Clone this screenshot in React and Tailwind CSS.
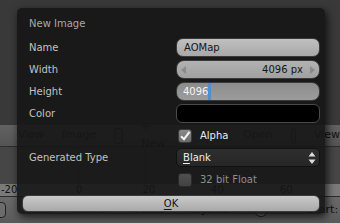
import React from "react";

const font = { fontFamily: '"DejaVu Sans", "Liberation Sans", sans-serif' };

const Label = ({ children }) => (
  <div className="h-[19px] flex items-center text-[10px] text-[#c2c2c2]">{children}</div>
);

const Row = ({ label, children }) => (
  <div className="grid grid-cols-[147px_144px] mb-[3px]">
    <Label>{label}</Label>
    <div className="h-[19px]">{children}</div>
  </div>
);

const Check = ({ checked, text, dim }) => (
  <div className="h-[19px] flex items-center gap-[8px] pl-[2px]">
    <div
      className={`w-[14px] h-[14px] rounded-[3px] border flex items-center justify-center ${
        checked
          ? "bg-gradient-to-b from-[#8a8a8a] to-[#6a6a6a] border-[#3a3a3a]"
          : "bg-gradient-to-b from-[#505050] to-[#424242] border-[#2a2a2a]"
      }`}
    >
      {checked && (
        <svg width="12" height="12" viewBox="0 0 12 12">
          <path d="M2 6.2 L5 9.2 L10.5 1.8" fill="none" stroke="#f2f2f2" strokeWidth="2" />
        </svg>
      )}
    </div>
    <span className={`text-[10px] ${dim ? "text-[#8e8e8e]" : "text-[#ececec]"}`}>{text}</span>
  </div>
);

export default function App() {
  return (
    <div className="relative w-[340px] h-[223px] overflow-hidden bg-[#3a3a3a]" style={font}>
      {/* blender ui behind the popup */}
      <div className="flex flex-col">
        <div className="h-[125px] bg-[#393939]" />
        <div className="h-[22px] bg-gradient-to-b from-[#626262] to-[#545454] border-b border-[#2c2c2c] flex items-center text-[11px] text-[#111] gap-[18px]">
          <div className="w-[10px] h-[16px] -ml-[4px] rounded-[4px] border border-[#222] bg-[#6c6c6c]" />
          <span>View</span>
          <span>Image</span>
          <div className="w-[30px] h-[16px] rounded-[3px] border border-[#222] bg-[#555]" />
          <span>+ New</span>
          <span className="ml-[60px]">Open</span>
          <div className="w-[16px] h-[16px] rounded-[3px] border border-[#222] bg-[#555]" />
          <span>View</span>
        </div>
        <div className="h-[37px] bg-[#464646] flex">
          <div className="ml-[78px] w-[1px] bg-[#333]" />
          <div className="ml-[66px] w-[1px] bg-[#333]" />
          <div className="ml-[68px] w-[1px] bg-[#333]" />
        </div>
        <div className="h-[12px] bg-[#7a7a7a] flex items-center text-[10px] text-[#111] leading-none">
          <span className="w-[20px] pl-[1px]">-20</span>
          <span className="ml-[56px]">0</span>
          <span className="ml-[60px]">20</span>
          <span className="ml-[56px]">40</span>
          <span className="ml-[56px]">60</span>
        </div>
        <div className="h-[27px] bg-gradient-to-b from-[#6a6a6a] to-[#5a5a5a] border-t border-[#2c2c2c] flex items-center text-[11px] text-[#111] gap-[20px]">
          <div className="w-[10px] h-[16px] -ml-[4px] rounded-[4px] border border-[#222] bg-[#6c6c6c]" />
          <span>View</span>
          <span>Marker</span>
          <span>Frame</span>
          <span>Playback</span>
          <div className="w-[14px] h-[14px] rounded-full border border-[#222] bg-[#777]" />
          <span className="ml-[20px]">Start:</span>
        </div>
      </div>

      {/* popup */}
      <div className="absolute left-[17px] top-[8px] w-[308px] h-[206px] rounded-[5px] bg-[rgba(22,22,22,0.9)] shadow-[2px_3px_9px_rgba(0,0,0,0.75)] pt-[7px] pl-[12px] pr-[5px]">
        <div className="h-[16px] mb-[7px] flex items-center text-[10px] text-[#a8a8a8]">New Image</div>

        <Row label="Name">
          <div className="h-full rounded-[7px] border border-[#3a3a3a] bg-gradient-to-b from-[#c0c0c0] to-[#a8a8a8] flex items-center pl-[7px] text-[10px] text-[#151515]">
            AOMap
          </div>
        </Row>

        <Row label="Width">
          <div className="h-full rounded-[8px] border border-[#3a3a3a] bg-gradient-to-b from-[#b2b2b2] to-[#a0a0a0] flex items-center justify-between px-[4px] text-[10px] text-[#151515]">
            <svg width="6" height="8" viewBox="0 0 6 8">
              <path d="M5 0 L0 4 L5 8 Z" fill="#8a8a8a" />
            </svg>
            <span className="ml-auto mr-[6px]">4096 px</span>
            <svg width="6" height="8" viewBox="0 0 6 8">
              <path d="M1 0 L6 4 L1 8 Z" fill="#8a8a8a" />
            </svg>
          </div>
        </Row>

        <Row label="Height">
          <div className="h-full rounded-[8px] border border-[#3a3a3a] bg-gradient-to-b from-[#8c8c8c] to-[#9c9c9c] flex items-center pl-[6px] text-[10px] text-[#f4f4f4]">
            <span>4096</span>
            <span className="w-[3px] h-[17px] bg-[#4f8fd0]" />
          </div>
        </Row>

        <Row label="Color">
          <div className="h-full rounded-[6px] border border-[#4a4a4a] bg-[#000]" />
        </Row>

        <div className="grid grid-cols-[147px_144px] mb-[3px]">
          <div />
          <Check checked text="Alpha" />
        </div>

        <Row label="Generated Type">
          <div className="h-full rounded-[5px] border border-[#111] bg-gradient-to-b from-[#2e2e2e] to-[#262626] flex items-center pl-[6px] pr-[3px] text-[10px] text-[#ececec]">
            <span>
              <span className="underline underline-offset-2">B</span>lank
            </span>
            <svg className="ml-auto" width="8" height="14" viewBox="0 0 8 14">
              <path d="M4 1 L7.5 5.5 L0.5 5.5 Z M4 13 L7.5 8.5 L0.5 8.5 Z" fill="#dcdcdc" />
            </svg>
          </div>
        </Row>

        <div className="grid grid-cols-[147px_144px]">
          <div />
          <Check text="32 bit Float" dim />
        </div>

        <div className="mt-[6px] -ml-[7px] w-[298px] h-[17px] rounded-[6px] border border-[#3a3a3a] bg-gradient-to-b from-[#cacaca] to-[#a9a9a9] flex items-center justify-center text-[10px] text-[#151515]">
          <span>
            <span className="underline underline-offset-2">O</span>K
          </span>
        </div>
      </div>
    </div>
  );
}
